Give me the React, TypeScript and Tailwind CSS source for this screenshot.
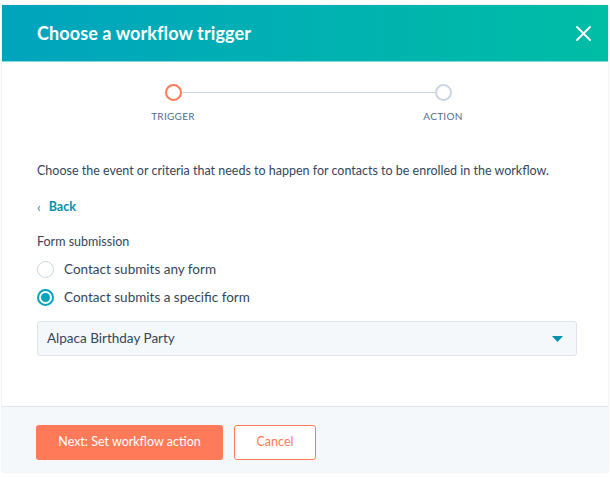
import React, { useState } from "react";

const App: React.FC = () => {
  const [choice, setChoice] = useState("specific");

  return (
    <div
      className="w-[610px] h-[477px] bg-white pt-[5px] pl-[2px] pr-[2px]"
      style={{ fontFamily: "Lato, 'Open Sans', sans-serif" }}
    >
      <div className="w-[606px] h-[467px] flex flex-col shadow-[0_0_2px_rgba(0,0,0,0.12)]">
        {/* header */}
        <div className="h-[57px] shrink-0 flex items-center justify-between pl-[35px] pr-[15px] bg-gradient-to-r from-[#00a4bd] to-[#00bda5] border-b border-[#7fd8e3]">
          <h1 className="text-white font-bold text-[18px] tracking-[0.1px]">
            Choose a workflow trigger
          </h1>
          <button className="text-white w-[20px] h-[20px] flex items-center justify-center">
            <svg width="15" height="15" viewBox="0 0 15 15" fill="none">
              <path d="M1 1L14 14M14 1L1 14" stroke="white" strokeWidth="1.8" strokeLinecap="round" />
            </svg>
          </button>
        </div>

        {/* body */}
        <div className="flex-1 bg-white px-[35px]">
          {/* stepper */}
          <div className="relative h-[68px] pt-[22px]">
            <div className="absolute left-[144px] right-[138px] top-[30px] h-px bg-[#cbd6e2]" />
            <div className="flex justify-between pl-[104px] pr-[98px]">
              <div className="flex flex-col items-center w-[64px]">
                <div className="relative w-[17px] h-[17px] rounded-full border-2 border-[#ff7a59] bg-white" />
                <span className="mt-[8px] text-[10px] text-[#516f90] tracking-[0.3px]">TRIGGER</span>
              </div>
              <div className="flex flex-col items-center w-[64px]">
                <div className="relative w-[17px] h-[17px] rounded-full border-2 border-[#cbd6e2] bg-white" />
                <span className="mt-[8px] text-[10px] text-[#516f90] tracking-[0.3px]">ACTION</span>
              </div>
            </div>
          </div>

          <p className="mt-[32px] text-[12.5px] text-[#33475b] leading-[18px]">
            Choose the event or criteria that needs to happen for contacts to be enrolled in the workflow.
          </p>

          <button className="mt-[18px] flex items-center gap-[8px] text-[#0091ae] font-bold text-[12.5px] leading-[18px]">
            <span className="text-[13px] font-normal">‹</span>
            Back
          </button>

          <div className="mt-[17px] text-[12.5px] text-[#33475b] leading-[18px]">Form submission</div>

          <div className="mt-[9px] flex flex-col gap-[10px]">
            {[
              { id: "any", label: "Contact submits any form" },
              { id: "specific", label: "Contact submits a specific form" },
            ].map((opt) => (
              <label
                key={opt.id}
                className="flex items-center gap-[10px] cursor-pointer h-[18px]"
                onClick={() => setChoice(opt.id)}
              >
                <span
                  className={
                    opt.id === choice
                      ? "w-[17px] h-[17px] rounded-full border-2 border-[#00a4bd] flex items-center justify-center bg-white"
                      : "w-[17px] h-[17px] rounded-full border border-[#cbd6e2] bg-white"
                  }
                >
                  {opt.id === choice && <span className="w-[9px] h-[9px] rounded-full bg-[#00a4bd]" />}
                </span>
                <span className="text-[13.5px] text-[#33475b]">{opt.label}</span>
              </label>
            ))}
          </div>

          <div className="mt-[15px] w-[540px] h-[35px] flex items-center justify-between pl-[9px] pr-[13px] bg-[#f5f8fa] border border-[#dfe3eb] rounded-[3px]">
            <span className="text-[13.5px] text-[#33475b]">Alpaca Birthday Party</span>
            <svg width="11" height="6" viewBox="0 0 11 6">
              <path d="M0 0H11L5.5 6Z" fill="#0091ae" />
            </svg>
          </div>
        </div>

        {/* footer */}
        <div className="h-[66px] shrink-0 flex items-start gap-[11px] pl-[34px] pt-[18px] bg-[#f5f8fa] border-t border-[#dfe3eb]">
          <button className="w-[187px] h-[35px] rounded-[3px] bg-[#ff7a59] text-white text-[12.5px]">
            Next: Set workflow action
          </button>
          <button className="w-[82px] h-[35px] rounded-[3px] bg-white border border-[#ff7a59] text-[#ff7a59] text-[12.5px]">
            Cancel
          </button>
        </div>
      </div>
    </div>
  );
};

export default App;
